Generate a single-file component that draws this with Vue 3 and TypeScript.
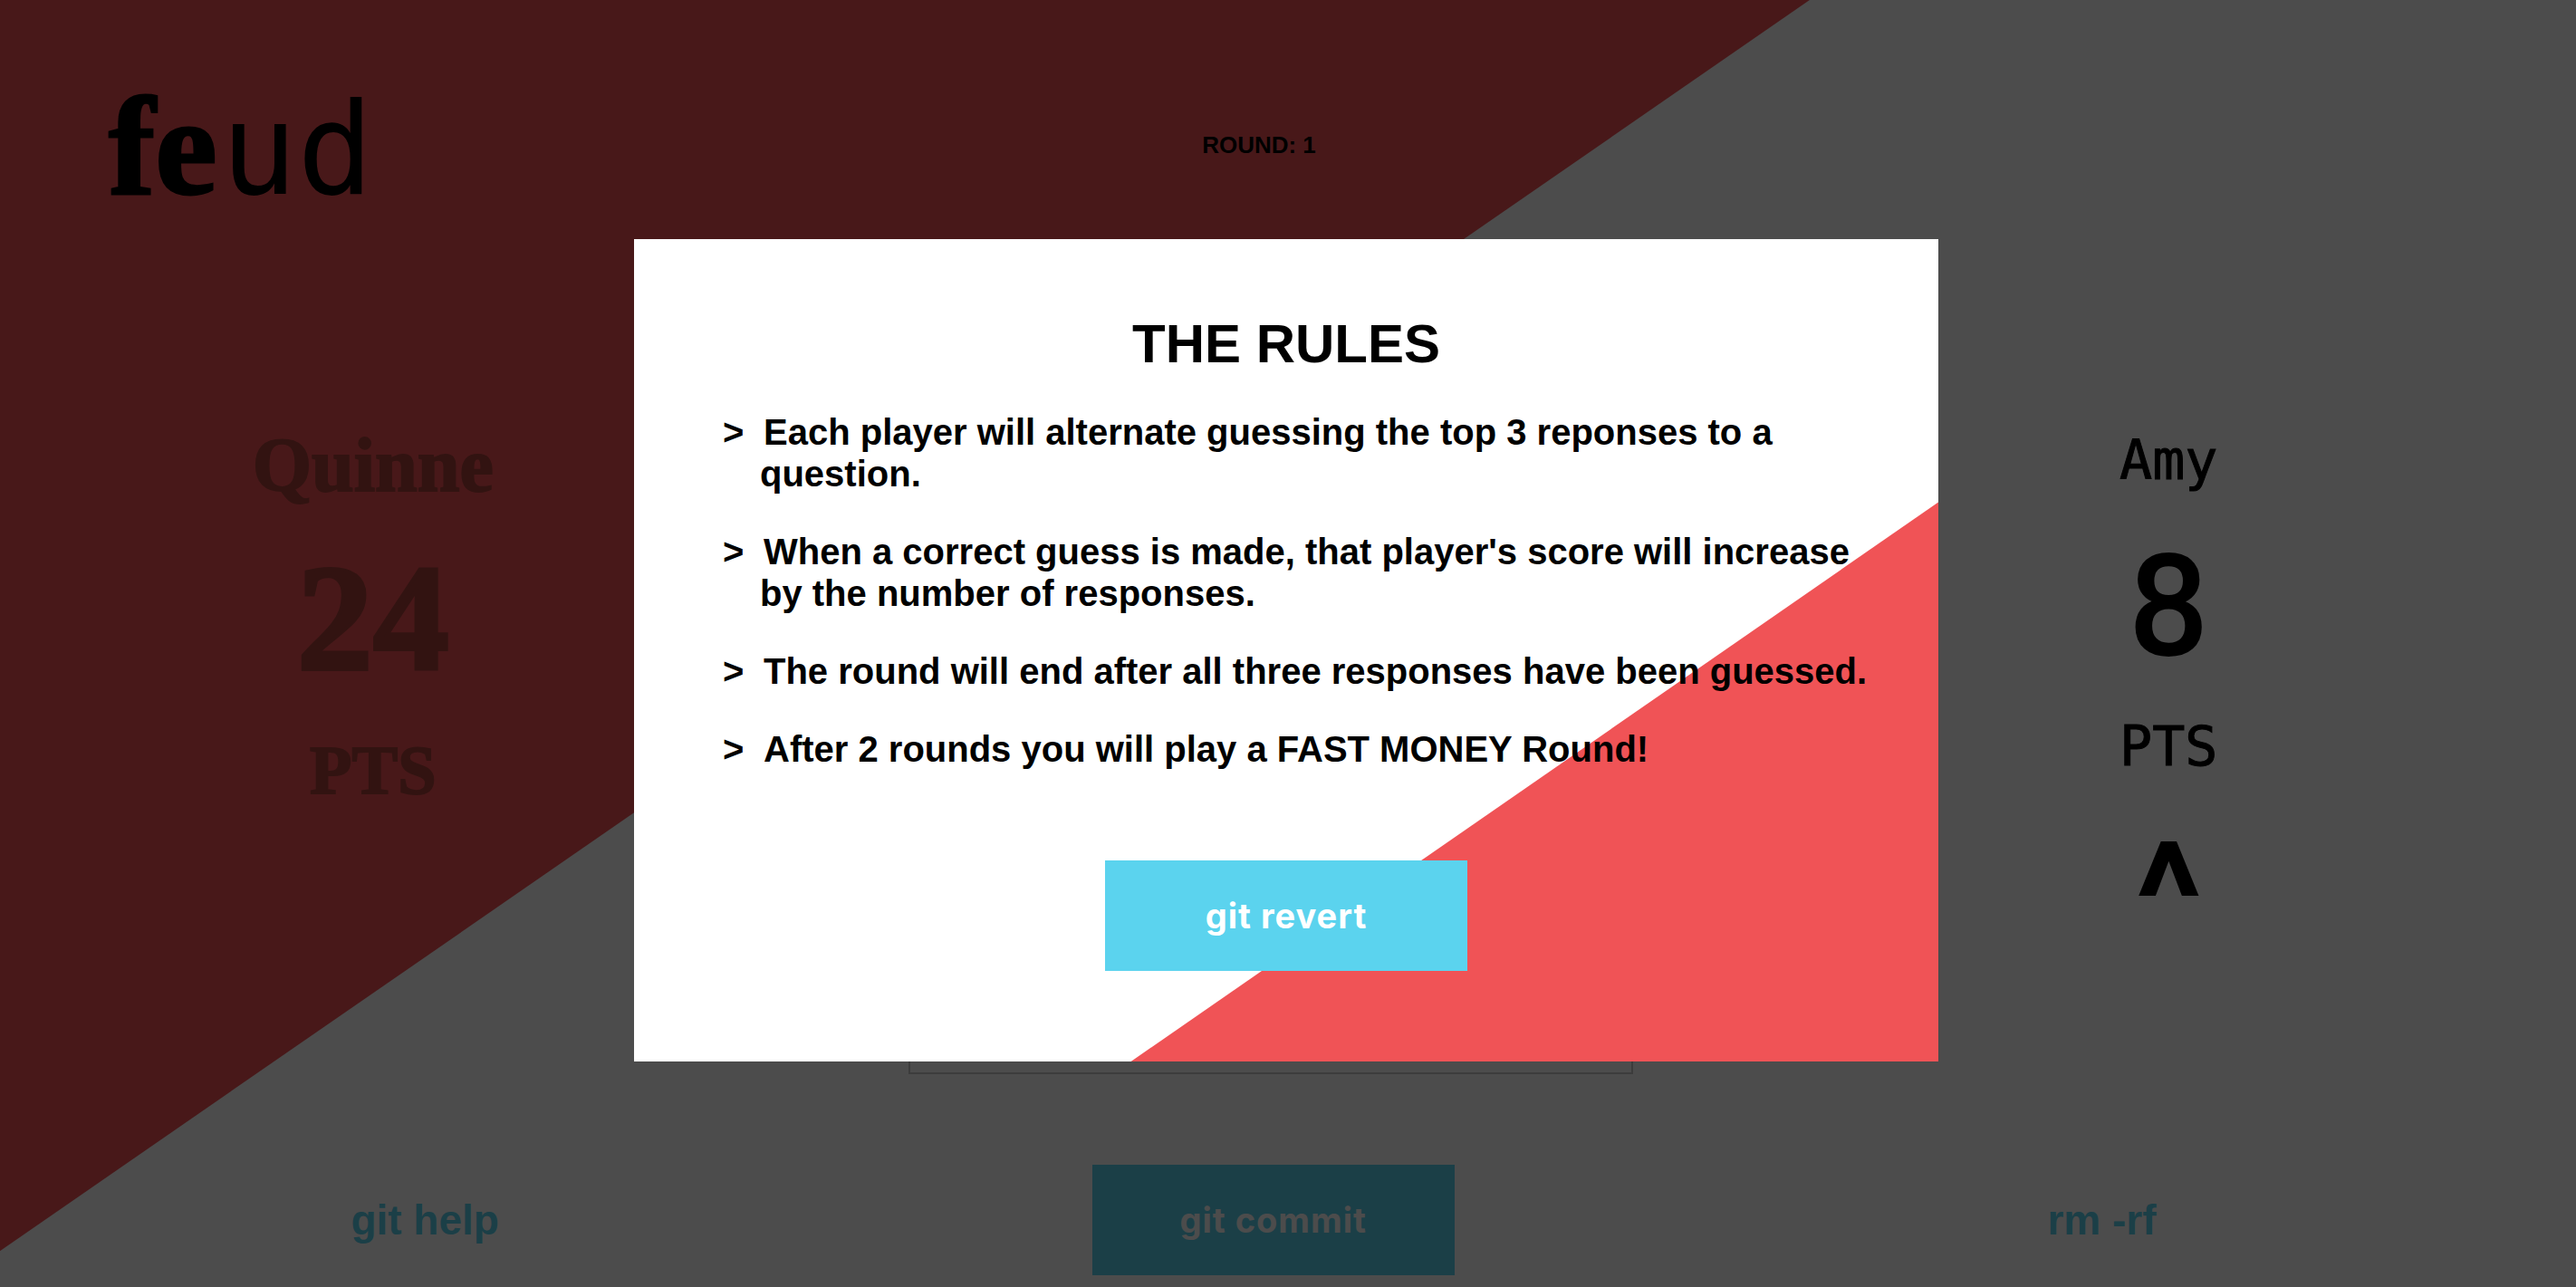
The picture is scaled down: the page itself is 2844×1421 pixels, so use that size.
<script setup lang="ts">
import { ref } from 'vue'

interface Player {
  name: string
  score: number
  style: 'serif' | 'mono'
  active: boolean
}

const round = ref(1)
const guess = ref('')
const rulesOpen = ref(true)

const players = ref<Player[]>([
  { name: 'Quinne', score: 24, style: 'serif', active: false },
  { name: 'Amy', score: 8, style: 'mono', active: true },
])

const rules: string[] = [
  'Each player will alternate guessing the top 3 reponses to a question.',
  "When a correct guess is made, that player's score will increase by the number of responses.",
  'The round will end after all three responses have been guessed.',
  'After 2 rounds you will play a FAST MONEY Round!',
]
</script>

<template>
  <div class="page">
    <header class="header">
      <h1 class="logo"><span class="logo-serif">fe</span><span class="logo-mono">ud</span></h1>
      <p class="round">ROUND: {{ round }}</p>
    </header>

    <main class="board">
      <section
        v-for="player in players"
        :key="player.name"
        class="player"
        :class="player.style"
      >
        <h2 class="name">{{ player.name }}</h2>
        <p class="score">{{ player.score }}</p>
        <p class="unit">PTS</p>
        <p v-if="player.active" class="turn">^</p>
      </section>
      <form id="guess-form" class="guess" @submit.prevent>
        <input v-model="guess" class="guess-input" type="text" aria-label="Your guess" />
      </form>
    </main>

    <footer class="footer">
      <a class="link" href="#rules" @click.prevent="rulesOpen = true">git help</a>
      <button class="button" type="submit" form="guess-form">git commit</button>
      <a class="link" href="#quit" @click.prevent>rm -rf</a>
    </footer>

    <div v-if="rulesOpen" class="overlay">
      <section id="rules" class="modal" role="dialog" aria-modal="true" aria-labelledby="rules-title">
        <h2 id="rules-title" class="title">THE RULES</h2>
        <ul class="rules">
          <li v-for="rule in rules" :key="rule" class="rule"><span class="marker">&gt;</span>{{ rule }}</li>
        </ul>
        <button class="button" type="button" @click="rulesOpen = false">git revert</button>
      </section>
    </div>
  </div>
</template>

<style>
body {
  margin: 0;
  background: #fff;
}
</style>

<style scoped>
* {
  box-sizing: border-box;
}

h1,
h2,
p,
ul {
  margin: 0;
  padding: 0;
}

.page {
  position: relative;
  z-index: 0;
  display: flex;
  flex-direction: column;
  min-height: 100vh;
  font-family: 'Helvetica Neue', 'Liberation Sans', Arial, sans-serif;
  font-weight: 700;
  color: #000;
}

.page::before,
.modal::before {
  content: '';
  position: absolute;
  z-index: -1;
  inset: 0;
  background: #f05356;
}

.page::before {
  clip-path: polygon(0 0, 70.25% 0, 0 97.2%);
}

.modal::before {
  clip-path: polygon(100% 32%, 100% 100%, 38.1% 100%);
}

.header {
  display: grid;
  grid-template-columns: 1fr auto 1fr;
  align-items: center;
  padding: 80px 184px 0 120px;
}

.logo {
  display: flex;
  align-items: baseline;
  gap: 4px;
  height: 160px;
  line-height: 164px;
}

.logo-serif {
  font-family: 'Liberation Serif', serif;
  font-size: 154px;
  -webkit-text-stroke: 3px #000;
}

.logo-mono {
  font-family: 'DejaVu Sans Mono', monospace;
  font-size: 140px;
  font-weight: 400;
}

.round {
  font-size: 26px;
  line-height: 32px;
}

.board {
  flex: 1;
  display: grid;
  grid-template-columns: 11fr 20fr 11fr;
  padding: 218px 98px 0 60px;
}

.player {
  grid-row: 1;
  display: flex;
  flex-direction: column;
  align-items: center;
  gap: 32px;
}

.serif {
  grid-column: 1;
  padding-top: 8px;
  font-family: 'Liberation Serif', serif;
  color: #a7413a;
}

.serif .name,
.serif .unit {
  line-height: 96px;
  -webkit-text-stroke: 2px #a7413a;
}

.serif .name {
  font-size: 84px;
}

.serif .unit {
  font-size: 76px;
}

.serif .score {
  font-size: 168px;
  line-height: 176px;
  -webkit-text-stroke: 4px #a7413a;
}

.mono {
  grid-column: 3;
  padding-top: 4px;
  font-family: 'DejaVu Sans Mono', monospace;
}

.mono .name,
.mono .unit {
  font-size: 60px;
  font-weight: 400;
  -webkit-text-stroke: 1px #000;
}

.mono .name {
  line-height: 92px;
}

.mono .unit {
  line-height: 76px;
}

.mono .score {
  font-size: 146px;
  font-weight: 400;
  line-height: 168px;
  -webkit-text-stroke: 4px #000;
}

.turn {
  font-family: Roboto, sans-serif;
  font-size: 168px;
  line-height: 196px;
}

.guess {
  grid-column: 2;
  grid-row: 1;
  display: flex;
  align-items: flex-end;
  justify-content: center;
}

.guess-input {
  width: 800px;
  max-width: 100%;
  height: 100px;
  padding: 0 24px;
  border: 2px solid #c8c8c8;
  border-radius: 0;
  background: #fff;
  font: inherit;
  font-size: 40px;
}

.footer {
  display: flex;
  align-items: center;
  justify-content: space-around;
  padding: 100px 136px 13px 60px;
}

.link {
  font-size: 46px;
  line-height: 56px;
  color: #5bd3ee;
  text-decoration: none;
}

.button {
  width: 400px;
  height: 122px;
  border: 0;
  border-radius: 0;
  background: #5bd3ee;
  color: #fff;
  font-family: Inter, sans-serif;
  font-size: 38px;
  font-weight: 700;
  letter-spacing: 1px;
  cursor: pointer;
}

.overlay {
  position: fixed;
  z-index: 1;
  inset: 0;
  display: flex;
  align-items: flex-start;
  justify-content: center;
  padding: 264px 4px 0 0;
  background: rgba(0, 0, 0, 0.7);
}

.modal {
  position: relative;
  z-index: 0;
  display: flex;
  flex-direction: column;
  align-items: center;
  width: 1440px;
  max-width: 100%;
  padding: 80px 60px 100px 100px;
  background: #fff;
}

.modal > .title,
.modal > .button {
  margin-right: 40px;
}

.title {
  font-size: 60px;
  line-height: 72px;
}

.rules {
  width: 100%;
  margin: 38px 0 100px;
  list-style: none;
}

.rule {
  padding-left: 39px;
  font-size: 40px;
  line-height: 46px;
  text-indent: -41px;
}

.rule + .rule {
  margin-top: 40px;
}

.marker {
  display: inline-block;
  width: 45px;
  text-indent: 0;
}
</style>
